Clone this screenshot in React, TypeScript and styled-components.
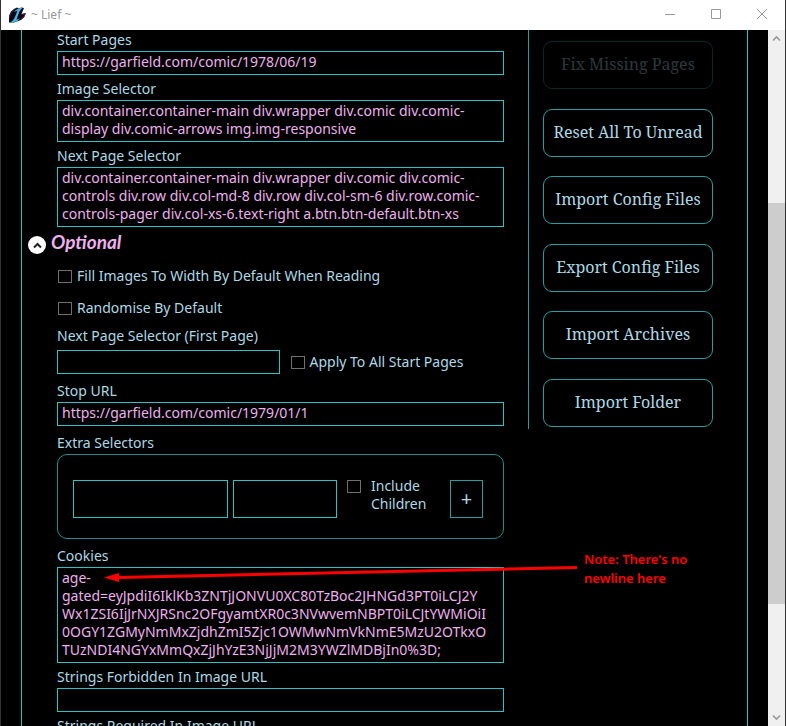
import React from "react";
import styled, { createGlobalStyle, css } from "styled-components";

const teal = "#2cc3c7";
const pale = "#add8e6";
const pink = "#eeb0ee";
const sans = '"Segoe UI", "Noto Sans", "Open Sans", sans-serif';

const GlobalStyle = createGlobalStyle`
  *, *::before, *::after { box-sizing: border-box; }
  html, body, #root { height: 100%; }
  body { margin: 0; background: #000; overflow: hidden; }
  button, input, textarea { font: inherit; color: inherit; margin: 0; }
`;

const AppWindow = styled.div`
  height: 100%;
  display: flex;
  flex-direction: column;
  overflow: hidden;
  border: solid #333;
  border-width: 0 1px;
  background: #000;
  color: ${pale};
  font: 14px/18px ${sans};
`;

const TitleBar = styled.header`
  flex: none;
  height: 30px;
  display: flex;
  align-items: center;
  padding-left: 8px;
  background: #fff;
  color: #999;
`;

const Title = styled.h1`
  flex: 1;
  margin: 0 0 0 5px;
  font: 12px/16px ${sans};
`;

const WindowButton = styled.button`
  width: 46px;
  height: 30px;
  padding: 0 0 2px;
  border: 0;
  background: none;
  color: #999;
  display: grid;
  place-items: center;
`;

const Body = styled.div`
  flex: 1;
  min-height: 0;
  display: flex;
`;

const Viewport = styled.main`
  flex: 1;
  min-width: 0;
  overflow: hidden;
  padding: 0 20px;
`;

const Panel = styled.div`
  position: relative;
  display: flex;
  align-items: flex-start;
  border: solid ${teal};
  border-width: 0 1px;
`;

const Form = styled.form`
  flex: 1;
  min-width: 0;
  display: flex;
  flex-direction: column;
  gap: 5px;
  padding: 1px 24px 20px 35px;
`;

const Field = styled.div<{ $spaced?: boolean }>`
  position: relative;
  display: flex;
  flex-direction: column;
  margin: ${(p) => (p.$spaced ? "3px 0" : "0")};
`;

const Label = styled.label`
  height: 20px;
`;

const boxStyle = css`
  display: block;
  min-width: 0;
  border: 1px solid ${teal};
  border-radius: 0;
  background: #000;
  color: ${pink};
  padding: 1px 4px 3px;
  outline: 0;
`;

const HalfInput = styled.input`
  ${boxStyle}
  width: calc(50% - 1px);
  height: 24px;
`;

const TextArea = styled.textarea`
  ${boxStyle}
  width: 100%;
  padding-right: 2px;
  resize: none;
  overflow: hidden;
  overflow-wrap: anywhere;
`;

const SectionHead = styled.div`
  display: flex;
  align-items: center;
  gap: 5px;
  height: 24px;
  margin-left: -29px;
`;

const SectionTitle = styled.h2`
  margin: 0;
  padding-bottom: 4px;
  color: ${pink};
  font: italic 700 19px/20px Lato, sans-serif;
`;

const Toggle = styled.button`
  width: 18px;
  height: 18px;
  margin-top: 2px;
  padding: 0;
  border: 0;
  border-radius: 50%;
  background: #fff;
  color: #222;
  display: grid;
  place-items: center;
`;

const CheckList = styled.div`
  display: flex;
  flex-direction: column;
  gap: 14px;
  padding: 6px 0 5px;
`;

const Check = styled.label`
  display: flex;
  align-items: flex-start;
  gap: 5px;
  padding-left: 1px;
`;

const Tick = styled.input`
  appearance: none;
  flex: none;
  width: 14px;
  height: 13px;
  margin-top: 3px;
  border: 1px solid #707070;
  background: #000;
`;

const InlineRow = styled.div`
  display: flex;
  align-items: center;
  gap: 10px;
  margin: 3px 0;
`;

const Group = styled.fieldset`
  display: flex;
  align-items: flex-start;
  gap: 5px;
  height: 85px;
  min-width: 0;
  margin: 0;
  padding: 25px 20px 20px 15px;
  border: 1px solid #1f8d90;
  border-radius: 10px;
`;

const SelectorInput = styled.input<{ $grow: number }>`
  ${boxStyle}
  flex: ${(p) => p.$grow} 1 0;
  height: 38px;
`;

const ChildCheck = styled.label`
  display: flex;
  gap: 10px;
  width: 88px;
  margin: -3px 10px 0 5px;
`;

const AddButton = styled.button`
  width: 33px;
  height: 38px;
  padding: 0;
  border: 1px solid #239fa3;
  background: #000;
  color: ${pale};
  font-size: 20px;
`;

const Actions = styled.aside`
  flex: none;
  width: 219px;
  height: 399px;
  display: flex;
  flex-direction: column;
  justify-content: space-between;
  padding: 11px 34px 2px 14px;
  border-left: 1px solid #239fa3;
`;

const ActionButton = styled.button`
  height: 48px;
  padding: 0 0 2px;
  border: 1px solid #239fa3;
  border-radius: 9px;
  background: #000;
  color: ${pale};
  font: 16px/20px "Droid Serif", "Noto Serif", "DejaVu Serif", serif;
  white-space: nowrap;
  &:disabled { opacity: 0.25; }
`;

const Arrow = styled.svg`
  position: absolute;
  left: 47px;
  top: 16px;
  pointer-events: none;
`;

const Note = styled.p`
  position: absolute;
  left: 527px;
  top: 3px;
  width: 120px;
  margin: 0;
  color: #f00;
  font: 600 13px/19px ${sans};
`;

const ScrollBar = styled.div`
  flex: none;
  width: 17px;
  display: flex;
  flex-direction: column;
  background: #f0f0f0;
`;

const ScrollButton = styled.button`
  height: 17px;
  padding: 0;
  border: 0;
  background: none;
  color: #999;
  display: grid;
  place-items: center;
`;

const ScrollPart = styled.div<{ $size: number; $thumb?: boolean }>`
  flex: ${(p) => p.$size} 1 0;
  background: ${(p) => (p.$thumb ? "#cdcdcd" : "transparent")};
`;

const Logo = () => (
  <svg width="17" height="17" viewBox="0 0 17 17" aria-hidden="true">
    <path d="M5 2 8 .5 10 1.500 12 .5 15 1 12.500 7 16.500 6.500 15 10.500 12 13 5 15.500 0 15.500 0 9 2 4.500z" fill="#0b0714" />
    <path d="M12.500 7.500 16.500 6.500Q15.500 10.500 11.500 12.500" fill="none" stroke="#552052" />
    <path d="M5 5Q7.500 1 14.500 .5 11 2 9.500 7L7.500 12.500Q9.500 12.500 11.500 11L8 14.500 1 15.800Q4.500 14 6 10L8.500 3.500z" fill="#48b7e2" />
    <path d="M.5 11Q1 5 6 2" fill="none" stroke="#3f2a55" />
  </svg>
);

const Chevron = ({ down = false, weight = 1.6 }: { down?: boolean; weight?: number }) => (
  <svg width="9" height="9" viewBox="0 0 9 9" fill="none" stroke="currentColor" strokeWidth={weight} aria-hidden="true">
    <path d={down ? "M1 2.500 4.500 6 8 2.500" : "M1 6.500 4.500 3 8 6.500"} />
  </svg>
);

const COOKIE = [
  "age-",
  "gated=eyJpdiI6IklKb3ZNTjJONVU0XC80TzBoc2JHNGd3PT0iLCJ2Y",
  "Wx1ZSI6IjJrNXJRSnc2OFgyamtXR0c3NVwvemNBPT0iLCJtYWMiOiI",
  "0OGY1ZGMyNmMxZjdhZmI5Zjc1OWMwNmVkNmE5MzU2OTkxO",
  "TUzNDI4NGYxMmQxZjJhYzE3NjJjM2M3YWZlMDBjIn0%3D;",
].join("\n");

const actions = [
  "Fix Missing Pages",
  "Reset All To Unread",
  "Import Config Files",
  "Export Config Files",
  "Import Archives",
  "Import Folder",
];

type AreaProps = { id: string; label: string; value?: string; rows?: number; children?: React.ReactNode };

const AreaField = ({ id, label, value = "", rows = 1, children }: AreaProps) => (
  <Field>
    <Label htmlFor={id}>{label}</Label>
    <TextArea id={id} rows={rows} defaultValue={value} spellCheck={false} />
    {children}
  </Field>
);

export default function App() {
  return (
    <AppWindow>
      <GlobalStyle />
      <TitleBar>
        <Logo />
        <Title>~ Lief ~</Title>
        <WindowButton aria-label="Minimize">
          <svg width="10" height="10" stroke="currentColor"><path d="M0 5.500H10" /></svg>
        </WindowButton>
        <WindowButton aria-label="Maximize">
          <svg width="10" height="10" stroke="currentColor" fill="none"><path d="M.5 .5H9.500V9.500H.5z" /></svg>
        </WindowButton>
        <WindowButton aria-label="Close">
          <svg width="10" height="10" stroke="currentColor"><path d="M0 0 10 10M10 0 0 10" /></svg>
        </WindowButton>
      </TitleBar>
      <Body>
        <Viewport>
          <Panel>
            <Form>
              <AreaField id="start" label="Start Pages" value="https://garfield.com/comic/1978/06/19" />
              <AreaField
                id="image"
                label="Image Selector"
                rows={2}
                value="div.container.container-main div.wrapper div.comic div.comic-display div.comic-arrows img.img-responsive"
              />
              <AreaField
                id="next"
                label="Next Page Selector"
                rows={3}
                value="div.container.container-main div.wrapper div.comic div.comic-controls div.row div.col-md-8 div.row div.col-sm-6 div.row.comic-controls-pager div.col-xs-6.text-right a.btn.btn-default.btn-xs"
              />
              <SectionHead>
                <Toggle type="button" aria-label="Collapse optional settings"><Chevron weight={2} /></Toggle>
                <SectionTitle>Optional</SectionTitle>
              </SectionHead>
              <CheckList>
                <Check><Tick type="checkbox" />Fill Images To Width By Default When Reading</Check>
                <Check><Tick type="checkbox" />Randomise By Default</Check>
              </CheckList>
              <Field>
                <Label htmlFor="first">Next Page Selector (First Page)</Label>
                <InlineRow>
                  <HalfInput id="first" />
                  <Check><Tick type="checkbox" />Apply To All Start Pages</Check>
                </InlineRow>
              </Field>
              <AreaField id="stop" label="Stop URL" value="https://garfield.com/comic/1979/01/1" />
              <Field $spaced>
                <Label as="span" id="extra">Extra Selectors</Label>
                <Group aria-labelledby="extra">
                  <SelectorInput $grow={157} aria-label="Selector" />
                  <SelectorInput $grow={102} aria-label="Attribute" />
                  <ChildCheck><Tick type="checkbox" />Include Children</ChildCheck>
                  <AddButton type="button">+</AddButton>
                </Group>
              </Field>
              <AreaField id="cookies" label="Cookies" rows={5} value={COOKIE}>
                <Arrow width="474" height="20" viewBox="0 0 474 20" aria-hidden="true">
                  <path d="M14 14.500 473 4.500" stroke="#f00" strokeWidth="3" />
                  <path d="M0 14.500 15 10V19z" fill="#f00" />
                </Arrow>
                <Note>Note: There's no newline here</Note>
              </AreaField>
              <AreaField id="forbidden" label="Strings Forbidden In Image URL" />
              <AreaField id="required" label="Strings Required In Image URL" />
            </Form>
            <Actions>
              {actions.map((name, i) => (
                <ActionButton key={name} type="button" disabled={i === 0}>{name}</ActionButton>
              ))}
            </Actions>
          </Panel>
        </Viewport>
        <ScrollBar>
          <ScrollButton aria-label="Scroll up"><Chevron /></ScrollButton>
          <ScrollPart $size={156} />
          <ScrollPart $size={401} $thumb />
          <ScrollPart $size={105} />
          <ScrollButton aria-label="Scroll down"><Chevron down /></ScrollButton>
        </ScrollBar>
      </Body>
    </AppWindow>
  );
}
